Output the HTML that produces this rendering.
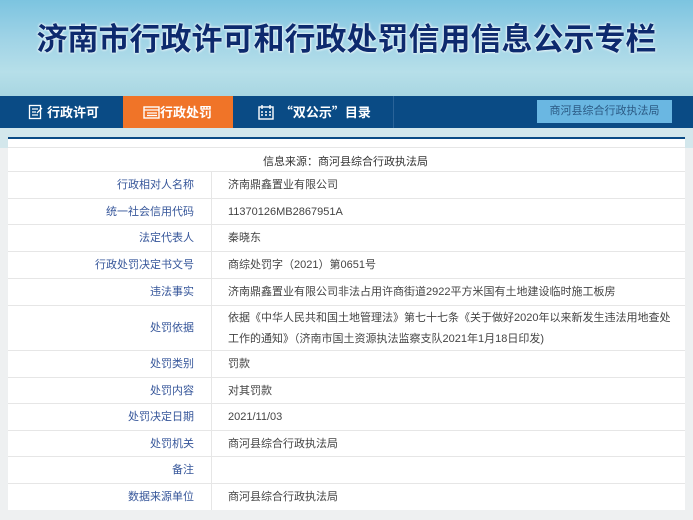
<!DOCTYPE html>
<html><head><meta charset="utf-8"><style>
*{margin:0;padding:0;box-sizing:border-box}
body{width:693px;height:520px;overflow:hidden;background:#eef0f1;font-family:"Liberation Sans","Noto Sans CJK SC",sans-serif;position:relative}
.hdr{position:absolute;left:0;top:0;width:693px;height:96px;background:linear-gradient(180deg,#7cc4e0 0%,#9fd3e6 40%,#b6dfe9 75%,#a8d6e2 100%)}
.hdr h1{position:absolute;left:0;width:693px;top:14px;text-align:center;font-size:31px;font-weight:bold;color:#0d2a6e;font-family:"Noto Sans CJK SC",sans-serif;text-shadow:0 0 3px #fff,0 0 2px #fff}
.nav{position:absolute;left:0;top:96px;width:693px;height:32px;background:#0a4b85}
.tab{position:absolute;top:0;height:32px;color:#fff;font-size:13px;font-weight:bold;line-height:32px;font-family:"Noto Sans CJK SC",sans-serif}
.btn{position:absolute;left:537px;top:4px;width:135px;height:23px;background:#6ab7e2;color:#2b5a84;font-size:11px;text-align:center;line-height:23px}
.band{position:absolute;left:0;top:128px;width:693px;height:20px;background:#d3e7ec}
.line{position:absolute;left:8px;top:137px;width:677px;height:2px;background:#0a4b85}
.panel{position:absolute;left:8px;top:139px;width:677px;height:371px;background:#fff}
.row{position:absolute;left:8px;width:677px;border-bottom:1px solid #e6e6e6;font-size:11px}
.l{position:absolute;left:0;top:0;width:204px;height:100%;border-right:1px solid #e6e6e6;text-align:right;padding-right:17px;color:#36569a}
.v{position:absolute;left:220px;top:0;width:452px;color:#444;line-height:21px}
</style></head><body>
<div class="hdr"><h1>济南市行政许可和行政处罚信用信息公示专栏</h1></div>
<div class="nav">
<div class="tab" style="left:28px"><svg width="16" height="16" style="vertical-align:-3px" viewBox="0 0 16 16"><rect x="1.5" y="1.5" width="11" height="13" fill="none" stroke="#fff" stroke-width="1.3"/><path d="M4 5h6M4 8h4M4 11h6M9 9l5-5" stroke="#fff" stroke-width="1.3" fill="none"/></svg> 行政许可</div>
<div class="tab" style="left:123px;width:110px;background:#f07428;padding-left:20px"><svg width="17" height="13" style="vertical-align:-2px" viewBox="0 0 17 13"><rect x="1" y="1" width="15" height="11" fill="none" stroke="#fff" stroke-width="1.4"/><path d="M1 4h15M4 7h10M4 9.5h10" stroke="#fff" stroke-width="1.2"/></svg>行政处罚</div>
<div class="tab" style="left:258px"><svg width="16" height="16" style="vertical-align:-3px" viewBox="0 0 16 16"><rect x="1" y="3" width="14" height="12" fill="none" stroke="#fff" stroke-width="1.4"/><path d="M4 1v4M12 1v4M3 8h2M7 8h2M11 8h2M3 11h2M7 11h2M11 11h2" stroke="#fff" stroke-width="1.4"/></svg> &nbsp;“双公示”目录</div>
<div style="position:absolute;left:393px;top:0;width:1px;height:32px;background:#2a6398"></div>
<div class="btn">商河县综合行政执法局</div>
</div>
<div class="band"></div>
<div class="panel"></div>
<div class="line"></div>
<div class="row" style="top:147px;height:25px;border-top:1px solid #e6e6e6"><div style="position:absolute;left:255px;top:5px;color:#333">信息来源：商河县综合行政执法局</div></div>
<div class="row" style="top:172px;height:27px;line-height:27px"><div class="l">行政相对人名称</div><div class="v" style="line-height:27px">济南鼎鑫置业有限公司</div></div>
<div class="row" style="top:199px;height:26px;line-height:26px"><div class="l">统一社会信用代码</div><div class="v" style="line-height:26px">11370126MB2867951A</div></div>
<div class="row" style="top:225px;height:27px;line-height:27px"><div class="l">法定代表人</div><div class="v" style="line-height:27px">秦晓东</div></div>
<div class="row" style="top:252px;height:27px;line-height:27px"><div class="l">行政处罚决定书文号</div><div class="v" style="line-height:27px">商综处罚字（2021）第0651号</div></div>
<div class="row" style="top:279px;height:27px;line-height:27px"><div class="l">违法事实</div><div class="v" style="line-height:27px">济南鼎鑫置业有限公司非法占用许商街道2922平方米国有土地建设临时施工板房</div></div>
<div class="row" style="top:306px;height:45px;line-height:45px"><div class="l">处罚依据</div><div class="v" style="top:2px">依据《中华人民共和国土地管理法》第七十七条《关于做好2020年以来新发生违法用地查处工作的通知》（济南市国土资源执法监察支队2021年1月18日印发)</div></div>
<div class="row" style="top:351px;height:27px;line-height:27px"><div class="l">处罚类别</div><div class="v" style="line-height:27px">罚款</div></div>
<div class="row" style="top:378px;height:26px;line-height:26px"><div class="l">处罚内容</div><div class="v" style="line-height:26px">对其罚款</div></div>
<div class="row" style="top:404px;height:27px;line-height:27px"><div class="l">处罚决定日期</div><div class="v" style="line-height:27px">2021/11/03</div></div>
<div class="row" style="top:431px;height:26px;line-height:26px"><div class="l">处罚机关</div><div class="v" style="line-height:26px">商河县综合行政执法局</div></div>
<div class="row" style="top:457px;height:27px;line-height:27px"><div class="l">备注</div></div>
<div class="row" style="top:484px;height:26px;line-height:26px;border-bottom:none"><div class="l">数据来源单位</div><div class="v" style="line-height:26px">商河县综合行政执法局</div></div>
</body></html>
